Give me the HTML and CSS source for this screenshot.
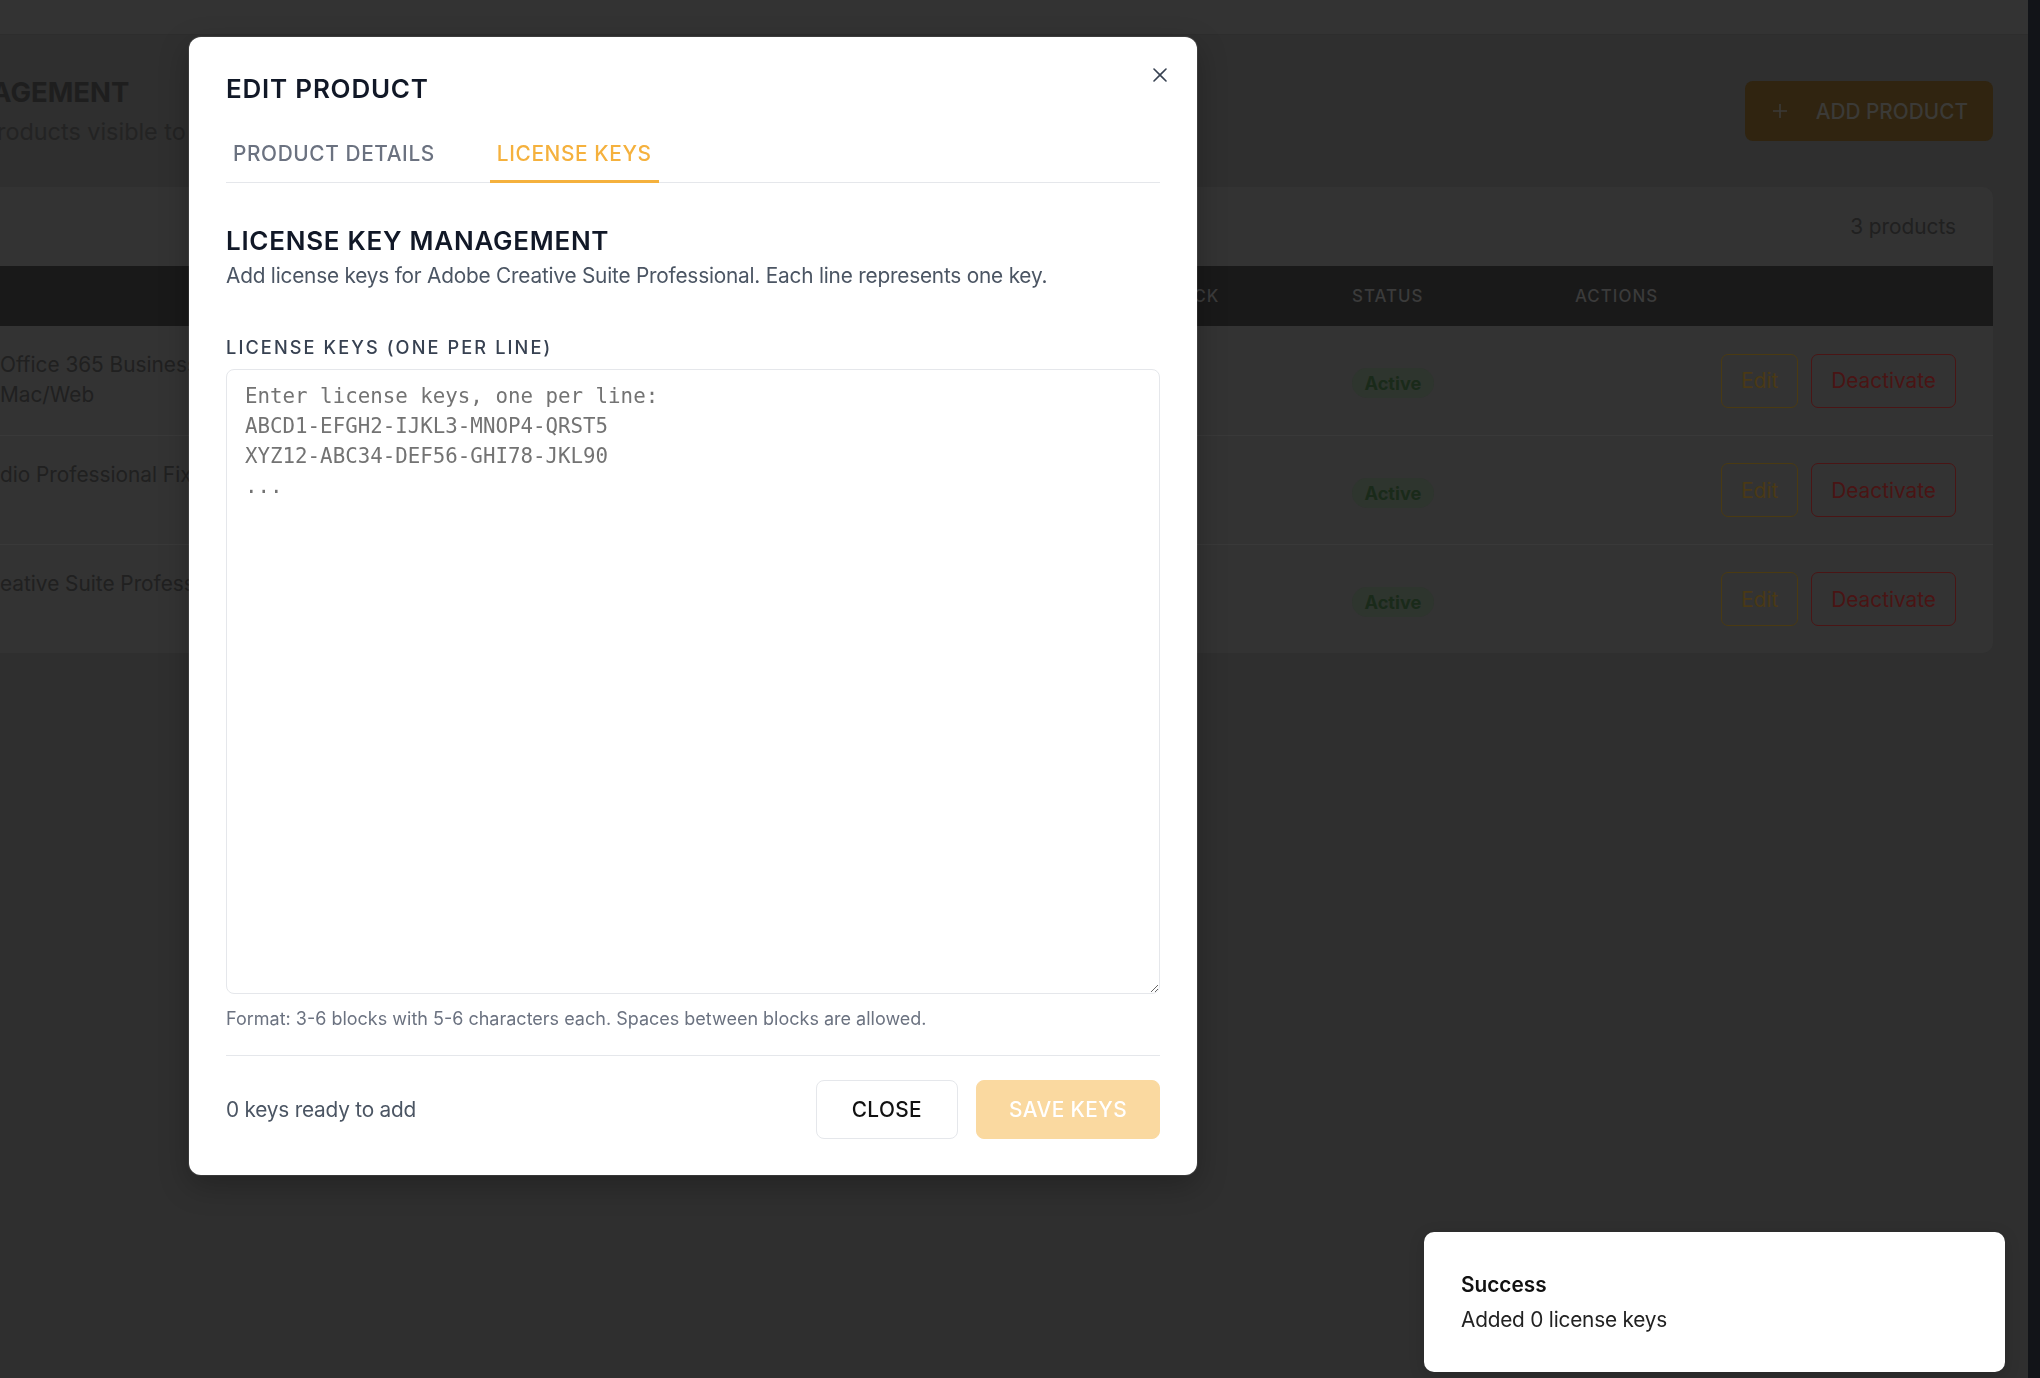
FILE: index.html
```html
<!DOCTYPE html>
<html lang="en">
<head>
<meta charset="utf-8">
<title>Edit Product</title>
<link rel="stylesheet" href="styles.css">
</head>
<body>
<div class="app">
  <div class="viewport">
    <header class="topbar"></header>
    <main class="main">
      <div class="page-head">
        <div class="titles">
          <h1 class="page-title">AGEMENT</h1>
          <p class="page-sub">roducts visible to customers in the store</p>
        </div>
        <button class="add-btn" type="button">
          <svg class="plus" viewBox="0 0 16 16" width="16" height="16"><path d="M8 1v14M1 8h14" stroke="currentColor" stroke-width="1.6" fill="none"/></svg>
          <span>ADD PRODUCT</span>
        </button>
      </div>
      <section class="card">
        <div class="card-top"><span class="count">3 products</span></div>
        <div class="trow thead">
          <div class="th"></div>
          <div class="th">STOCK</div>
          <div class="th">STATUS</div>
          <div class="th">ACTIONS</div>
        </div>
        <div class="trow">
          <div class="name"><div>Office 365 Business Premium</div><div>Mac/Web</div></div>
          <div class="cell"></div>
          <div class="cell"><span class="badge">Active</span></div>
          <div class="cell actions"><button class="btn-edit" type="button">Edit</button><button class="btn-deact" type="button">Deactivate</button></div>
        </div>
        <div class="trow">
          <div class="name"><div>dio Professional Fixed License</div><div>&nbsp;</div></div>
          <div class="cell"></div>
          <div class="cell"><span class="badge">Active</span></div>
          <div class="cell actions"><button class="btn-edit" type="button">Edit</button><button class="btn-deact" type="button">Deactivate</button></div>
        </div>
        <div class="trow">
          <div class="name"><div>eative Suite Professional</div><div>&nbsp;</div></div>
          <div class="cell"></div>
          <div class="cell"><span class="badge">Active</span></div>
          <div class="cell actions"><button class="btn-edit" type="button">Edit</button><button class="btn-deact" type="button">Deactivate</button></div>
        </div>
      </section>
    </main>
  </div>
  <div class="scrollbar"></div>
</div>

<div class="modal" role="dialog">
  <button class="close-x" type="button" aria-label="Close">
    <svg viewBox="0 0 16 16" width="16" height="16"><path d="M2 2l12 12M14 2L2 14" stroke="currentColor" stroke-width="1.6" stroke-linecap="round" fill="none"/></svg>
  </button>
  <h2 class="modal-title">EDIT PRODUCT</h2>
  <nav class="tabs">
    <span class="tab">PRODUCT DETAILS</span>
    <span class="tab active">LICENSE KEYS</span>
  </nav>
  <h3 class="section-title">LICENSE KEY MANAGEMENT</h3>
  <p class="section-desc">Add license keys for Adobe Creative Suite Professional. Each line represents one key.</p>
  <label class="field-label" for="keys">LICENSE KEYS (ONE PER LINE)</label>
  <textarea id="keys" class="keys" placeholder="Enter license keys, one per line:&#10;ABCD1-EFGH2-IJKL3-MNOP4-QRST5&#10;XYZ12-ABC34-DEF56-GHI78-JKL90&#10;..."></textarea>
  <p class="hint">Format: 3-6 blocks with 5-6 characters each. Spaces between blocks are allowed.</p>
  <div class="footer">
    <span class="ready">0 keys ready to add</span>
    <div class="footer-btns">
      <button class="btn btn-close" type="button">CLOSE</button>
      <button class="btn btn-save" type="button">SAVE KEYS</button>
    </div>
  </div>
</div>

<div class="toast">
  <div class="toast-title">Success</div>
  <div class="toast-body">Added 0 license keys</div>
</div>
</body>
</html>
```
FILE: styles.css
```css
* { box-sizing: border-box; }
html, body { margin: 0; padding: 0; }
body {
  width: 2040px;
  height: 1378px;
  overflow: hidden;
  background: #333333;
  font-family: Inter, "Noto Sans", "Liberation Sans", sans-serif;
}
button { font-family: inherit; cursor: pointer; }

.app { display: flex; height: 1378px; }
.viewport {
  flex: 1;
  display: flex;
  flex-direction: column;
  background: #2f2f2f;
  overflow: hidden;
}
.scrollbar { width: 12px; flex: none; background: #121418; }
.topbar {
  height: 35px;
  flex: none;
  background: #333333;
  border-bottom: 1px solid #2d2d2d;
}
.main { padding: 0 35px 0 0; }

.page-head {
  display: flex;
  justify-content: space-between;
  align-items: flex-start;
  padding-top: 40px;
}
.page-title {
  margin: 0 0 0 -9px;
  font-size: 27.5px;
  line-height: 34px;
  font-weight: 700;
  color: #1e1e1e;
}
.page-sub {
  margin: 8px 0 0 -3px;
  font-size: 23.4px;
  line-height: 30px;
  color: #232323;
}
.add-btn {
  margin-top: 6px;
  height: 60px;
  display: flex;
  align-items: center;
  gap: 28px;
  padding: 0 25px 0 27px;
  background: #302410;
  border: none;
  border-radius: 8px;
  color: #3b3a37;
  font-size: 20.8px;
  font-weight: 500;
  letter-spacing: 0;
}
.plus { width: 16px; height: 16px; display: block; }

.card {
  margin-top: 40px;
  margin-left: -20px;
  background: #333333;
  border-radius: 10px;
  overflow: hidden;
}
.card-top {
  height: 79px;
  display: flex;
  align-items: center;
  justify-content: flex-end;
  padding-right: 37px;
}
.count { font-size: 20.8px; color: #202020; }

.trow {
  display: grid;
  grid-template-columns: 1156px 196px 223px 1fr;
  padding: 0 37px 0 20px;
  height: 109px;
  align-items: center;
}
.trow + .trow { border-top: 1px solid #393939; }
.thead + .trow { border-top: none; }
.thead {
  height: 60px;
  background: #191919;
}
.th {
  font-size: 16.9px;
  font-weight: 500;
  letter-spacing: 0.06em;
  color: #3b3b3b;
}
.name {
  align-self: start;
  padding-top: 24px;
  font-size: 20.8px;
  line-height: 30px;
  color: #202020;
  white-space: nowrap;
}
.badge {
  display: inline-flex;
  align-items: center;
  height: 30px;
  padding: 0 12.5px;
  border-radius: 15px;
  background: #2e352e;
  color: #1a2a1a;
  font-size: 18.2px;
  font-weight: 700;
  margin-top: 5px;
}
.actions { display: flex; justify-content: flex-end; gap: 13px; }
.btn-edit, .btn-deact {
  height: 54px;
  background: transparent;
  border-radius: 7px;
  font-size: 20.8px;
  padding: 0 19px;
}
.btn-edit { border: 1px solid #4a3a12; color: #4a3915; }
.btn-deact { border: 1px solid #4a1515; color: #4a1414; }

/* Modal */
.modal {
  position: fixed;
  left: 189px;
  top: 37px;
  width: 1008px;
  padding: 36px 37px 36px;
  background: #ffffff;
  border-radius: 12px;
  box-shadow: 0 0 0 1px rgba(255,255,255,0.08), 0 10px 30px rgba(0,0,0,0.25);
}
.close-x {
  position: absolute;
  top: 30px;
  right: 29px;
  width: 16px;
  height: 16px;
  padding: 0;
  border: none;
  background: none;
  color: #374151;
}
.close-x svg { display: block; }
.modal-title {
  margin: 0;
  font-size: 26px;
  line-height: 32px;
  font-weight: 600;
  letter-spacing: 0.03em;
  color: #111827;
}
.tabs {
  display: flex;
  gap: 48px;
  margin-top: 35px;
  border-bottom: 1px solid #e5e7eb;
}
.tab {
  padding: 0 7px 12px;
  margin-bottom: -1px;
  border-bottom: 3px solid transparent;
  font-size: 20.8px;
  line-height: 28px;
  font-weight: 500;
  letter-spacing: 0.03em;
  color: #6b7280;
}
.tab.active { color: #f5b13d; border-bottom-color: #f5b13d; }
.section-title {
  margin: 42px 0 0;
  font-size: 26px;
  line-height: 32px;
  font-weight: 600;
  letter-spacing: 0.028em;
  color: #111827;
}
.section-desc {
  margin: 5px 0 0;
  font-size: 20.8px;
  line-height: 28px;
  letter-spacing: -0.01em;
  color: #4b5563;
}
.field-label {
  display: block;
  margin-top: 45px;
  font-size: 18.2px;
  line-height: 24px;
  font-weight: 500;
  letter-spacing: 0.115em;
  color: #374151;
}
.keys {
  display: block;
  width: 100%;
  height: 625px;
  margin-top: 10px;
  padding: 11px 18px;
  border: 1px solid #e5e7eb;
  border-radius: 8px;
  font-family: "DejaVu Sans Mono", "Liberation Mono", monospace;
  font-size: 20.8px;
  line-height: 30px;
  color: #111827;
  background: #fff;
  outline: none;
}
.keys::placeholder { color: #737373; opacity: 1; }
.hint {
  margin: 13px 0 0;
  font-size: 18px;
  line-height: 24px;
  color: #6b7280;
}
.footer {
  margin-top: 24px;
  padding-top: 24px;
  border-top: 1px solid #e5e7eb;
  display: flex;
  align-items: center;
  justify-content: space-between;
}
.ready { font-size: 20.8px; line-height: 28px; letter-spacing: -0.01em; color: #4b5563; }
.footer-btns { display: flex; gap: 18px; }
.btn {
  height: 59px;
  padding: 0 35px;
  border-radius: 8px;
  font-size: 20.8px;
  font-weight: 500;
  letter-spacing: 0.02em;
}
.btn-close { background: #fff; border: 1px solid #e5e7eb; color: #111111; }
.btn-save { background: #fad9a0; border: 1px solid #fad9a0; color: #ffffff; padding: 0 32px; }

/* Toast */
.toast {
  position: fixed;
  right: 35px;
  bottom: 6px;
  width: 581px;
  height: 140px;
  padding: 0 37px;
  display: flex;
  flex-direction: column;
  justify-content: center;
  gap: 7px;
  background: #ffffff;
  border-radius: 10px;
  box-shadow: 0 4px 16px rgba(0,0,0,0.15);
}
.toast-title { font-size: 20.8px; line-height: 28px; font-weight: 600; color: #111111; }
.toast-body { font-size: 20.8px; line-height: 28px; letter-spacing: -0.01em; color: #222222; }
```
